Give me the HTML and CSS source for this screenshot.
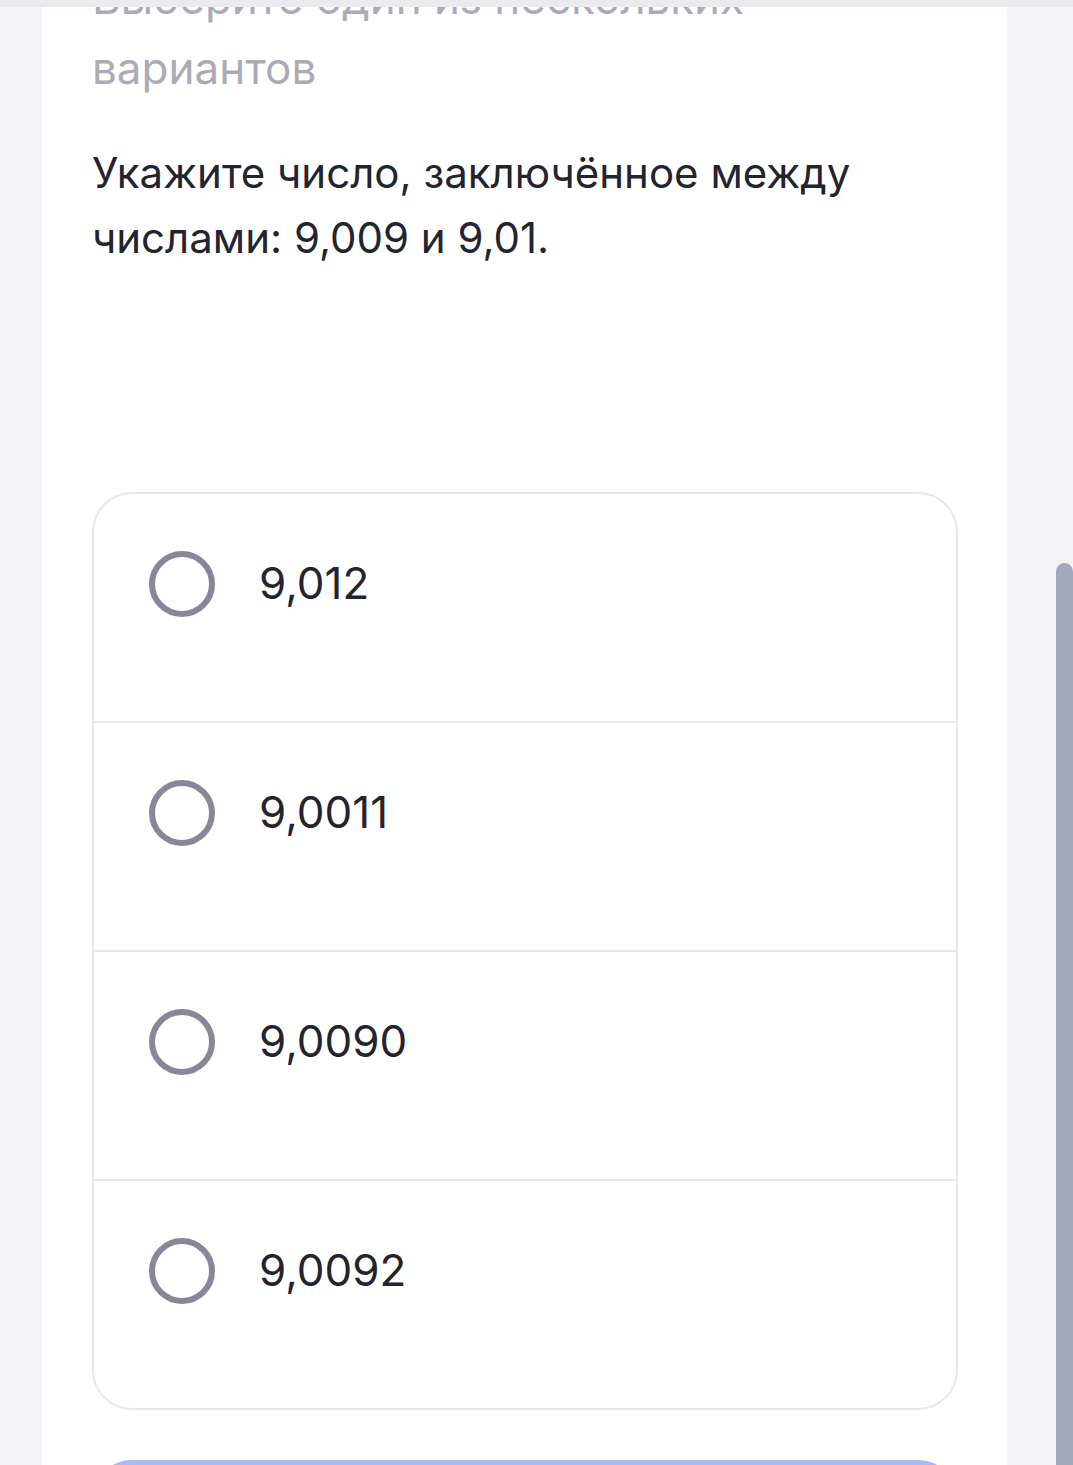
FILE: index.html
```html
<!DOCTYPE html>
<html lang="ru">
<head>
  <meta charset="UTF-8">
  <meta name="viewport" content="width=device-width, initial-scale=1.0">
  <title>Задание</title>
  <link rel="stylesheet" href="styles.css">
</head>
<body>
  <div class="topbar"></div>
  <div class="page">
    <div class="card">
      <p class="hint">Выберите один из нескольких вариантов</p>
      <p class="question">Укажите число, заключённое между числами: 9,009 и 9,01.</p>

      <div class="options">
        <label class="option">
          <span class="radio"></span>
          <span class="option-text">9,012</span>
        </label>
        <label class="option">
          <span class="radio"></span>
          <span class="option-text">9,0011</span>
        </label>
        <label class="option">
          <span class="radio"></span>
          <span class="option-text">9,0090</span>
        </label>
        <label class="option">
          <span class="radio"></span>
          <span class="option-text">9,0092</span>
        </label>
      </div>

      <button class="submit"></button>
    </div>
  </div>
  <div class="scrollbar"></div>
</body>
</html>
```

FILE: styles.css
```css
html, body {
  margin: 0;
  padding: 0;
}
body {
  font-family: 'Inter', 'Noto Sans', sans-serif;
  background-color: #f3f3f7;
  color: #24242f;
  height: 1465px;
  overflow: hidden;
}
.topbar {
  height: 7px;
  background-color: #ebebef;
}
.page {
  padding-left: 42px;
}
.card {
  width: 866px;
  background-color: #fff;
  padding: 0 49px 40px 50px;
  height: 1500px;
  overflow: hidden;
}
.hint {
  margin: -44px 0 0;
  font-size: 44px;
  line-height: 70px;
  color: #ababb5;
}
.question {
  margin: 37px 0 0;
  font-size: 42px;
  line-height: 65px;
  color: #24242f;
}
.options {
  margin-top: 222px;
  border: 2px solid #e8e8ec;
  border-radius: 40px;
  overflow: hidden;
}
.option {
  display: flex;
  align-items: center;
  gap: 44px;
  height: 170px;
  padding: 57px 0 0 55px;
  box-sizing: content-box;
  border-top: 2px solid #e8e8ec;
}
.option:first-child {
  border-top: none;
}
.radio {
  width: 54px;
  height: 54px;
  border: 6px solid #878797;
  border-radius: 50%;
  flex-shrink: 0;
  align-self: flex-start;
}
.option-text {
  font-size: 44px;
  line-height: 64px;
  align-self: flex-start;
  color: #24242f;
}
.submit {
  display: block;
  width: 100%;
  height: 100px;
  margin-top: 50px;
  border: none;
  border-radius: 40px;
  background-color: #a9b9f1;
}
.scrollbar {
  position: fixed;
  top: 563px;
  right: 0;
  width: 17px;
  bottom: 0;
  background-color: #a4a8ba;
  border-radius: 9px 9px 0 0;
}
```
